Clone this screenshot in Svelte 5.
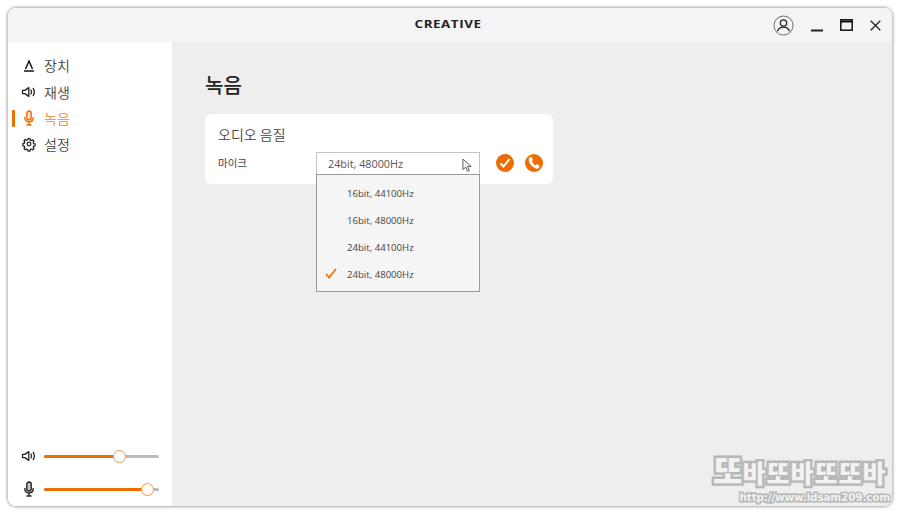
<script>
  const nav = [
    { id: 'device', label: '장치' },
    { id: 'play', label: '재생' },
    { id: 'rec', label: '녹음', active: true },
    { id: 'set', label: '설정' }
  ];
  const options = ['16bit, 44100Hz', '16bit, 48000Hz', '24bit, 44100Hz', '24bit, 48000Hz'];
  const selected = '24bit, 48000Hz';
</script>

{#snippet speaker()}
  <svg class="ic" viewBox="0 0 16 16" fill="none" stroke="#222" stroke-width="1.300">
    <path d="M1.500 6.400h2.400L7.800 3.600v8.800L3.900 9.600H1.500z" stroke-linejoin="round" />
    <path d="M10 6c.8 1.300.8 2.700 0 4M12.200 4.400c1.500 2.300 1.500 4.900 0 7.200" stroke-linecap="round" />
  </svg>
{/snippet}
{#snippet mic(color)}
  <svg class="ic" viewBox="0 0 16 16" fill="none" stroke={color} stroke-width="1.400">
    <rect x="5.800" y="1" width="4.400" height="9" rx="2.200" fill={color} fill-opacity=".25" />
    <path d="M3.800 7.500c0 3 1.800 4.500 4.200 4.500s4.200-1.500 4.200-4.500M8 12v3M6 15h4" stroke-linecap="round" />
  </svg>
{/snippet}

<div class="page">
  <div class="window">
    <header class="titlebar">
      <div class="side"></div>
      <div class="logo">CREATIVE</div>
      <div class="controls">
        <svg class="user" viewBox="0 0 22 22" fill="none">
          <circle cx="11" cy="11" r="10" stroke="#777" stroke-width="1.100" />
          <circle cx="11" cy="8.300" r="3.300" stroke="#222" stroke-width="1.300" />
          <path d="M4.800 17c.8-3 3.300-4.400 6.200-4.400s5.400 1.400 6.200 4.400" stroke="#222" stroke-width="1.300" />
        </svg>
        <svg class="min" viewBox="0 0 12 12"><path d="M0 10.500h12" stroke="#222" stroke-width="1.800" /></svg>
        <svg class="max" viewBox="0 0 13 12" fill="none">
          <rect x=".8" y=".8" width="11.400" height="10.400" stroke="#111" stroke-width="1.500" />
          <path d="M1 2.500h11" stroke="#111" stroke-width="2" />
        </svg>
        <svg class="close" viewBox="0 0 11 11"><path d="M.7.7l9.600 9.600M10.300.7L.7 10.300" stroke="#222" stroke-width="1.300" /></svg>
      </div>
    </header>

    <div class="body">
      <aside class="sidebar">
        <nav class="nav">
          {#each nav as item}
            <div class="nav-item" class:active={item.active}>
              {#if item.active}<span class="marker"></span>{/if}
              <span class="nav-icon">
                {#if item.id === 'device'}
                  <svg class="ic" viewBox="0 0 16 16" fill="none" stroke="#111">
                    <path d="M4.500 12L8 4l3.500 8" stroke-width="1.500" />
                    <path d="M3 14h10" stroke-width="1.600" />
                  </svg>
                {:else if item.id === 'play'}
                  {@render speaker()}
                {:else if item.id === 'rec'}
                  {@render mic('#ee6c00')}
                {:else}
                  <svg class="ic" viewBox="-2 -2 20 20" fill="none" stroke="#222" stroke-width="1.600">
                    <circle cx="8" cy="8" r="2.300" />
                    <path d="M6.800 1.300h2.400l.4 1.900 1.300.6 1.700-1 1.600 1.700-1 1.600.6 1.300 1.800.5v2.300l-1.800.5-.6 1.300 1 1.600-1.600 1.700-1.700-1-1.300.6-.4 1.900H6.800l-.4-1.900-1.300-.6-1.700 1-1.600-1.700 1-1.600-.6-1.300-1.800-.5V7.400l1.800-.5.600-1.300-1-1.600 1.600-1.700 1.700 1 1.300-.6z" stroke-linejoin="round" />
                  </svg>
                {/if}
              </span>
              <span class="nav-label">{item.label}</span>
            </div>
          {/each}
        </nav>
        <div class="sliders">
          <div class="slider-row">
            <span class="nav-icon">{@render speaker()}</span>
            <div class="track"><div class="fill" style="width: 65%"></div><span class="thumb" style="left: 65%"></span></div>
          </div>
          <div class="slider-row">
            <span class="nav-icon">{@render mic('#222')}</span>
            <div class="track"><div class="fill" style="width: 89.500%"></div><span class="thumb" style="left: 89.500%"></span></div>
          </div>
        </div>
      </aside>

      <main class="content">
        <h1>녹음</h1>
        <section class="card">
          <h2>오디오 음질</h2>
          <div class="row">
            <span class="row-label">마이크</span>
            <div class="select">
              <span>{selected}</span>
              <svg class="cursor" viewBox="0 0 12 16">
                <path d="M1 1v11.500l3-2.700 2 4.600 2-.9-2-4.500h4z" fill="#f4f4f4" stroke="#444" stroke-width=".9" />
              </svg>
              <div class="menu">
                {#each options as o}
                  <div class="option">
                    {#if o === selected}
                      <svg class="tick" viewBox="0 0 12 11" fill="none"><path d="M1 6l3 3.500L11 1" stroke="#ee6c00" stroke-width="1.700" /></svg>
                    {/if}
                    {o}
                  </div>
                {/each}
              </div>
            </div>
            <div class="round-btn">
              <svg viewBox="0 0 18 18" fill="none"><path d="M4.500 9.500l3 3 6-7.500" stroke="#fff" stroke-width="2" /></svg>
            </div>
            <div class="round-btn">
              <svg viewBox="0 0 18 18"><path d="M4.200 3.800l2.200-1 1.700 3.200-1.200 1.300c.5 1.400 2 3.200 3.600 3.900l1.300-1.200 3 1.900-1 2.200c-.5.700-1.500.9-2.500.6-3.500-1.200-6.500-4.200-7.500-7.900-.3-1.100 0-2.300.4-3z" fill="#fff" /></svg>
            </div>
          </div>
        </section>
        <div class="watermark">
          <div class="wm-big"><span class="wm-first">또</span>바또바또또바</div>
          <div class="wm-small">http://www.idsam209.com</div>
        </div>
      </main>
    </div>
  </div>
</div>

<style>
  :global(body) {
    margin: 0;
    background: #fff;
  }
  .page {
    width: 900px;
    height: 514px;
    box-sizing: border-box;
    padding: 8px;
    font-family: "Noto Sans CJK KR", "Open Sans", sans-serif;
    overflow: hidden;
  }
  .window {
    height: 498px;
    width: 884px;
    border-radius: 8px;
    overflow: hidden;
    display: flex;
    flex-direction: column;
    box-shadow: 0 0 3px 1px rgba(0, 0, 0, 0.35);
  }
  .titlebar {
    height: 34px;
    background: #f4f4f4;
    display: flex;
    align-items: center;
    flex: none;
  }
  .side {
    flex: 1;
  }
  .logo {
    font-family: "Open Sans", sans-serif;
    font-weight: 700;
    font-size: 10px;
    letter-spacing: 0.4px;
    color: #222;
    transform: scaleX(1.340);
    width: 66px;
    margin: -3px 0 0 6px;
    text-align: center;
    white-space: nowrap;
  }
  .controls {
    flex: 1;
    display: flex;
    align-items: center;
    justify-content: flex-end;
    padding-right: 11px;
  }
  .user {
    width: 21px;
    height: 21px;
    margin-right: 17px;
  }
  .min {
    width: 12px;
    height: 12px;
    margin-right: 17px;
    margin-top: 2px;
  }
  .max {
    width: 13px;
    height: 12px;
    margin-right: 17px;
  }
  .close {
    width: 11px;
    height: 11px;
  }
  .body {
    flex: 1;
    display: flex;
    min-height: 0;
  }
  .sidebar {
    width: 164px;
    background: #fff;
    display: flex;
    flex-direction: column;
    justify-content: space-between;
    flex: none;
  }
  .nav {
    padding-top: 10px;
  }
  .nav-item {
    position: relative;
    height: 26.400px;
    display: flex;
    align-items: center;
    padding-left: 13px;
    color: #444;
    font-size: 14px;
    font-weight: 350;
  }
  .nav-item.active {
    color: #f0862a;
  }
  .marker {
    position: absolute;
    left: 4px;
    top: 5px;
    width: 3px;
    height: 17px;
    background: #ee6c00;
    border-radius: 1px;
  }
  .nav-icon {
    width: 16px;
    height: 16px;
    display: block;
    flex: none;
    margin-right: 7px;
  }
  .ic {
    width: 16px;
    height: 16px;
    display: block;
  }
  .sliders {
    padding-bottom: 9px;
    display: flex;
    flex-direction: column;
    gap: 17px;
  }
  .slider-row {
    height: 16px;
    display: flex;
    align-items: center;
    padding-left: 13px;
  }
  .track {
    position: relative;
    width: 115px;
    height: 3px;
    background: #bbb;
    border-radius: 2px;
  }
  .fill {
    height: 100%;
    background: #ee6c00;
    border-radius: 2px;
  }
  .thumb {
    position: absolute;
    top: -5px;
    width: 11px;
    height: 11px;
    margin-left: -6px;
    background: #fff;
    border: 1px solid #f29a4a;
    border-radius: 50%;
  }
  .content {
    position: relative;
    flex: 1;
    background: #eee;
    padding: 28px 33px;
  }
  h1 {
    margin: 0 0 14px;
    font-size: 20px;
    line-height: 30px;
    font-weight: 500;
    color: #222;
  }
  .card {
    width: 348px;
    height: 70px;
    box-sizing: border-box;
    background: #fff;
    border-radius: 6px;
    padding: 10px 13px;
  }
  h2 {
    margin: 0 0 8px;
    font-size: 14px;
    line-height: 20px;
    font-weight: 350;
    color: #444;
  }
  .row {
    display: flex;
    align-items: center;
    height: 22px;
  }
  .row-label {
    width: 98px;
    flex: none;
    font-size: 10.500px;
    color: #444;
    margin-top: -1px;
  }
  .select {
    position: relative;
    flex: none;
    width: 164px;
    height: 22px;
    box-sizing: border-box;
    border: 1px solid #c4c4c4;
    border-bottom: none;
    padding-left: 11px;
    font: 400 10.800px/21px "Open Sans", sans-serif;
    color: #555;
    margin-right: 16px;
  }
  .cursor {
    position: absolute;
    right: 6px;
    top: 5px;
    width: 11px;
    height: 15px;
  }
  .menu {
    position: absolute;
    left: -1px;
    top: 21px;
    width: 164px;
    height: 118px;
    box-sizing: border-box;
    background: #f5f5f5;
    border: 1px solid #9a9a9a;
    padding-top: 6px;
    z-index: 2;
  }
  .option {
    position: relative;
    height: 27px;
    padding-left: 30px;
    line-height: 26px;
    font-size: 9.600px;
    color: #444;
  }
  .tick {
    position: absolute;
    left: 8px;
    top: 6px;
    width: 12px;
    height: 11px;
  }
  .round-btn {
    width: 18px;
    height: 18px;
    flex: none;
    border-radius: 50%;
    background: #ee6c00;
    margin-right: 11px;
  }
  .round-btn svg {
    display: block;
    width: 18px;
    height: 18px;
  }
  .watermark {
    position: absolute;
    right: 2px;
    bottom: 2px;
    width: 180px;
    color: #f2f2f2;
    pointer-events: none;
    text-align: right;
  }
  .wm-big {
    font-size: 25px;
    line-height: 37px;
    height: 37px;
    font-weight: 900;
    white-space: nowrap;
    letter-spacing: 1px;
    -webkit-text-stroke: 5px #b8b8b8;
    paint-order: stroke fill;
    text-align: left;
    padding-left: 3px;
  }
  .wm-first {
    font-size: 32px;
    line-height: 0;
    letter-spacing: 0;
  }
  .wm-small {
    font: 700 10.500px/13px "DejaVu Sans", sans-serif;
    white-space: nowrap;
    letter-spacing: -0.2px;
    -webkit-text-stroke: 3px #b8b8b8;
    paint-order: stroke fill;
  }
</style>
